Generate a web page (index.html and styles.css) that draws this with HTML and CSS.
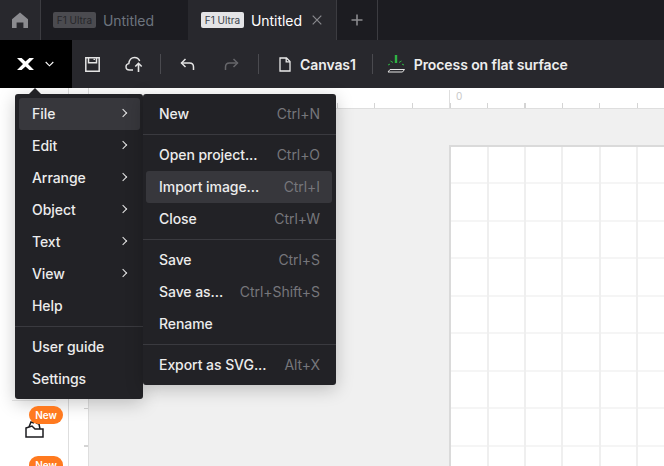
FILE: index.html
```html
<!DOCTYPE html>
<html lang="en">
<head>
    <meta charset="UTF-8">
    <title>Untitled</title>
    <link rel="stylesheet" href="styles.css">
</head>
<body>
    <div class="app">
        <div class="tabs">
            <div class="tab-home">
                <svg width="16" height="16" viewBox="0 0 16 16"><path d="M0 7.200 8 .6l8 6.600V16h-4.600v-5.600H4.600V16H0z" fill="#8b8b8f"/></svg>
            </div>
            <div class="tab">
                <span class="badge">F1 Ultra</span>
                <span class="tab-name">Untitled</span>
            </div>
            <div class="tab tab-active">
                <span class="badge">F1 Ultra</span>
                <span class="tab-name">Untitled</span>
                <svg class="tab-close" width="10" height="10" viewBox="0 0 10 10"><path d="M.7.7l8.600 8.600M9.300.7.7 9.300" stroke="#8a8a8e" stroke-width="1.200" fill="none"/></svg>
            </div>
            <div class="tab-add">
                <svg width="12" height="12" viewBox="0 0 12 12"><path d="M6 .5v11M.5 6h11" stroke="#8a8a8e" stroke-width="1.600" fill="none"/></svg>
            </div>
        </div>

        <div class="toolbar">
            <div class="logo">
                <svg width="17" height="12" viewBox="0 0 17 12"><path d="M0 0h4.600l3.900 3.600L12.400 0H17l-6 6 6 6h-4.600L8.500 8.400 4.600 12H0l6-6z" fill="#fff"/></svg>
                <svg class="logo-caret" width="9" height="6" viewBox="0 0 9 6"><path d="M.7 1l3.800 3.800L8.300 1" stroke="#fff" stroke-width="1.100" fill="none"/></svg>
            </div>
            <div class="tool-group">
                <svg class="icon-save" width="15" height="15" viewBox="0 0 15 15" fill="none" stroke="#e4e4e4" stroke-width="1.500"><path d="M.8.8h13.400v13.400H.8z"/><path d="M3.500.8v5h8v-5"/><path d="M8.500 2.400h1.500" stroke-width="1.200"/></svg>
                <svg class="icon-cloud" width="19" height="16" viewBox="0 0 19 16" fill="none" stroke="#e4e4e4" stroke-width="1.400"><path d="M8 14H4.500C2.500 14 1 12.500 1 10.800c0-1.700 1.200-3 2.800-3.200C4.300 4 6.600 1.500 9.500 1.500c2.400 0 4.400 1.500 5.200 3.600"/><path d="M13.500 16V7.500M10.300 10.500l3.200-3.200 3.200 3.200" stroke-width="1.600"/></svg>
            </div>
            <i class="sep sep-a"></i>
            <div class="tool-group tool-history">
                <svg width="15" height="13" viewBox="0 0 15 13" fill="none" stroke="#e4e4e4" stroke-width="1.500"><path d="M5.500 1 1.500 5l4 4"/><path d="M1.500 5h8c2.500 0 4 1.500 4 4v3"/></svg>
                <svg width="15" height="13" viewBox="0 0 15 13" fill="none" stroke="#66666a" stroke-width="1.500"><path d="M9.500 1l4 4-4 4"/><path d="M13.500 5h-8c-2.500 0-4 1.500-4 4v3"/></svg>
            </div>
            <i class="sep sep-b"></i>
            <svg class="icon-doc" width="12" height="15" viewBox="0 0 12 15" fill="none" stroke="#eaeaea" stroke-width="1.300"><path d="M1 1h6.500L11 4.500V14H1z"/><path d="M7.200 1v3.800H11"/></svg>
            <span class="canvas-name">Canvas1</span>
            <i class="sep sep-c"></i>
            <svg class="icon-process" width="18" height="19" viewBox="0 0 18 19" fill="none"><path d="M9 0v8" stroke="#2fb344" stroke-width="2.400"/><path d="M3.500 6l2.500 1.500M14.500 6 12 7.500M1 10l2-.9M17 10l-2-.9" stroke="#2fb344" stroke-width="1"/><path d="M3 14.500h14.500L15.500 17H1z" stroke="#e4e4e4" stroke-width="1"/></svg>
            <span class="process-name">Process on flat surface</span>
        </div>

        <div class="workspace">
            <div class="sidebar">
                <div class="side-line"></div>
                <div class="side-tool">
                    <span class="new-badge">New</span>
                    <svg width="19" height="17" viewBox="0 0 19 17" fill="none" stroke="#1b1b1f" stroke-width="1.500"><path d="M1 7l6-2 3 3h8v8H1z"/><path d="M4 6l2-5 3 1M11 2l3 1 1 5"/></svg>
                </div>
                <div class="side-tool">
                    <span class="new-badge">New</span>
                </div>
            </div>
            <div class="vruler"></div>
            <div class="board">
                <div class="hruler"><span class="ruler-zero">0</span></div>
                <div class="stage">
                    <div class="sheet"></div>
                </div>
            </div>
        </div>

        <div class="menus">
            <i class="menu-caret"></i>
            <ul class="menu menu-main">
                <li class="item item-on">File<span class="more"></span></li>
                <li class="item">Edit<span class="more"></span></li>
                <li class="item">Arrange<span class="more"></span></li>
                <li class="item">Object<span class="more"></span></li>
                <li class="item">Text<span class="more"></span></li>
                <li class="item">View<span class="more"></span></li>
                <li class="item">Help</li>
                <li class="rule"></li>
                <li class="item">User guide</li>
                <li class="item">Settings</li>
            </ul>
            <ul class="menu menu-sub">
                <li class="item">New<span class="keys">Ctrl+N</span></li>
                <li class="rule"></li>
                <li class="item">Open project...<span class="keys">Ctrl+O</span></li>
                <li class="item item-on">Import image...<span class="keys">Ctrl+I</span></li>
                <li class="item">Close<span class="keys">Ctrl+W</span></li>
                <li class="rule"></li>
                <li class="item">Save<span class="keys">Ctrl+S</span></li>
                <li class="item">Save as...<span class="keys">Ctrl+Shift+S</span></li>
                <li class="item">Rename</li>
                <li class="rule"></li>
                <li class="item">Export as SVG...<span class="keys">Alt+X</span></li>
            </ul>
        </div>
    </div>
</body>
</html>
```

FILE: styles.css
```css
* {
    box-sizing: border-box;
}

body {
    margin: 0;
    font-family: Inter, "Noto Sans", sans-serif;
    font-size: 14px;
}

.app {
    position: relative;
    display: flex;
    flex-direction: column;
    height: 466px;
    overflow: hidden;
    background: #fff;
}

/* tabs */
.tabs {
    display: flex;
    height: 40px;
    background: #1c1c21;
}

.tab-home {
    display: flex;
    align-items: center;
    justify-content: center;
    width: 41px;
    background: #28282d;
    border-right: 1px solid #3c3c41;
}

.tab {
    display: flex;
    align-items: center;
    width: 147px;
    padding-left: 12px;
    gap: 7px;
    color: #6d747e;
}

.tab-active {
    position: relative;
    width: 149px;
    padding-left: 13px;
    background: #28282d;
    color: #fff;
    border-right: 1px solid #3c3c41;
}

.badge {
    width: 43px;
    height: 16px;
    border-radius: 2px;
    background: #4b4b50;
    color: #26262a;
    font-size: 10px;
    line-height: 16px;
    text-align: center;
}

.tab-active .badge {
    background: #e4e4e6;
    color: #3a3f4a;
}

.tab-name {
    letter-spacing: -.05px;
}

.tab-close {
    margin-left: 3px;
}

.tab-add {
    display: flex;
    align-items: center;
    justify-content: center;
    width: 41px;
    border-right: 1px solid #3c3c41;
}

/* toolbar */
.toolbar {
    display: flex;
    align-items: center;
    height: 48px;
    background: #28282d;
    color: #eee;
}

.logo {
    display: flex;
    align-items: center;
    width: 72px;
    height: 100%;
    padding-left: 17px;
    background: #000;
}

.logo-caret {
    margin-left: 11px;
}

.tool-group {
    display: flex;
    align-items: center;
}

.icon-save {
    margin-left: 13px;
}

.icon-cloud {
    margin-left: 25px;
}

.tool-history {
    gap: 29px;
}

.sep {
    width: 1px;
    height: 20px;
    background: #4a4a4f;
}

.sep-a {
    margin: 0 19px 0 16px;
}

.sep-b {
    margin: 0 20px 0 19px;
}

.sep-c {
    margin: 0 14px 0 16px;
}

.canvas-name {
    margin-left: 9px;
    font-weight: 600;
    letter-spacing: -.1px;
}

.process-name {
    margin-left: 9px;
    font-weight: 600;
    letter-spacing: -.09px;
}

/* canvas area */
.workspace {
    display: flex;
    flex: 1;
    min-height: 0;
}

.sidebar {
    width: 69px;
    padding-top: 312px;
    border-right: 1px solid #dedede;
}

.side-line {
    width: 44px;
    height: 1px;
    margin-left: 12px;
    background: #e6e6e6;
}

.side-tool {
    position: relative;
    height: 50px;
    padding: 20px 0 0 25px;
}

.new-badge {
    position: absolute;
    top: 5px;
    left: 29px;
    z-index: 1;
    width: 34px;
    height: 18px;
    border-radius: 9px;
    background: #ff7a1f;
    color: #fff;
    font-size: 10px;
    font-weight: 600;
    line-height: 18px;
    text-align: center;
}

.vruler {
    width: 20px;
    border-right: 1px solid #dedede;
    background: repeating-linear-gradient(to bottom, #d4d4d4 0 1px, transparent 1px 37.5px) right 0 top 19.500px / 4px 100% no-repeat;
}

.board {
    flex: 1;
    display: flex;
    flex-direction: column;
    min-width: 0;
}

.hruler {
    position: relative;
    flex: none;
    height: 21px;
    border-bottom: 1px solid #dedede;
    background: repeating-linear-gradient(to right, #d4d4d4 0 1px, transparent 1px 37.5px) 22.500px bottom / 100% 5px no-repeat;
}

.ruler-zero {
    position: absolute;
    top: 2px;
    left: 360px;
    padding-left: 6px;
    height: 19px;
    border-left: 1px solid #dedede;
    color: #c8c8c8;
    font-size: 10px;
    line-height: 13px;
}

.stage {
    flex: 1;
    padding: 36px 0 0 360px;
    background: #f0f0f0;
}

.sheet {
    height: 400px;
    border-top: 2px solid #dadada;
    border-left: 2px solid #dadada;
    background-color: #fff;
    background-image:
        repeating-linear-gradient(to right, transparent 0 35.500px, #efefef 35.500px 37.500px),
        repeating-linear-gradient(to bottom, transparent 0 35.500px, #f5f5f5 35.500px 37.500px);
}

/* menus */
.menus {
    position: absolute;
    top: 94px;
    left: 15px;
    display: flex;
    align-items: flex-start;
}

.menu-caret {
    position: absolute;
    top: -6px;
    left: 14px;
    border: 6px solid transparent;
    border-top: 0;
    border-bottom-color: #222226;
}

.menu {
    margin: 0;
    padding: 4px 0;
    list-style: none;
    background: #222226;
    border-radius: 3px;
    box-shadow: 0 4px 18px rgba(0, 0, 0, .22);
    color: #ececec;
    font-weight: 500;
    letter-spacing: -.06px;
}

.menu-main {
    width: 128px;
}

.menu-sub {
    width: 193px;
}

.item {
    display: flex;
    align-items: center;
    justify-content: space-between;
    height: 32px;
    margin: 0 3px 0 4px;
    padding: 0 12px 2px 13px;
    border-radius: 3px;
}

.menu-sub .item {
    margin: 0 4px 0 3px;
}

.item-on {
    background: #37373c;
}

.rule {
    height: 1px;
    margin: 4px 0;
    background: #3a3a3f;
}

.more {
    width: 6px;
    height: 6px;
    margin-right: 2px;
    border-top: 1.300px solid #e8e8e8;
    border-right: 1.300px solid #e8e8e8;
    transform: rotate(45deg);
}

.keys {
    color: #76767b;
    font-weight: 400;
}
```
